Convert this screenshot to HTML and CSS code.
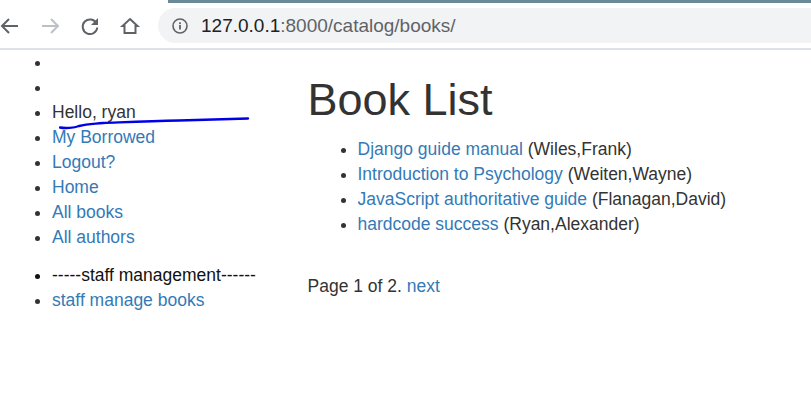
FILE: index.html
```html
<!DOCTYPE html>
<html lang="en">
<head>
<meta charset="utf-8">
<title>Book List</title>
<link rel="stylesheet" href="styles.css">
</head>
<body>
<header class="toolbar">
  <div class="tab-edge"></div>
  <div class="toolbar-row">
    <nav class="nav-buttons">
      <svg class="icon" width="24" height="24" viewBox="0 0 24 24"><path d="M20 12H4.500M11 5l-7 7 7 7" fill="none" stroke="#5f6368" stroke-width="2"/></svg>
      <svg class="icon" width="24" height="24" viewBox="0 0 24 24"><path d="M4 12h15.500M13 5l7 7-7 7" fill="none" stroke="#bdc1c6" stroke-width="2"/></svg>
      <svg class="icon" width="24" height="24" viewBox="0 0 24 24"><path d="M18.600 9.500A7.300 7.300 0 1 0 19.300 13.500" fill="none" stroke="#5f6368" stroke-width="2"/><path d="M20 4v7h-7z" fill="#5f6368"/></svg>
      <svg class="icon" width="24" height="24" viewBox="0 0 24 24"><path d="M12 5l7.500 7H17.500v7h-11v-7H4.500z" fill="none" stroke="#5f6368" stroke-width="2" stroke-linejoin="miter"/></svg>
    </nav>
    <div class="address-bar">
      <svg class="info" width="16" height="16" viewBox="0 0 16 16"><circle cx="8" cy="8" r="7" fill="none" stroke="#5f6368" stroke-width="1.600"/><rect x="7.100" y="7" width="1.800" height="4.500" fill="#5f6368"/><rect x="7.100" y="4.300" width="1.800" height="1.800" fill="#5f6368"/></svg>
      <span class="url"><span class="host">127.0.0.1</span>:8000/catalog/books/</span>
    </div>
  </div>
</header>
<div class="page">
  <aside class="sidebar">
    <ul class="side-list">
      <li>&nbsp;</li>
      <li>&nbsp;</li>
      <li>Hello, ryan</li>
      <li><a href="#">My Borrowed</a></li>
      <li><a href="#">Logout?</a></li>
      <li><a href="#">Home</a></li>
      <li><a href="#">All books</a></li>
      <li><a href="#">All authors</a></li>
    </ul>
    <ul class="side-list">
      <li class="staff">-----staff management------</li>
      <li><a href="#">staff manage books</a></li>
    </ul>
  </aside>
  <main class="content">
    <h1>Book List</h1>
    <ul class="books">
      <li><a href="#">Django guide manual</a> (Wiles,Frank)</li>
      <li><a href="#">Introduction to Psychology</a> (Weiten,Wayne)</li>
      <li><a href="#">JavaScript authoritative guide</a> (Flanagan,David)</li>
      <li><a href="#">hardcode success</a> (Ryan,Alexander)</li>
    </ul>
    <p class="pager">Page 1 of 2. <a href="#">next</a></p>
  </main>
</div>
<svg class="scribble" width="200" height="14" viewBox="0 0 200 14"><path d="M1 10.500C6 11.500 15 11 20 9C28 7 34 7 44 6C70 5 90 4 120 3.500C150 2.500 175 2 189 1.500" fill="none" stroke="#0000e6" stroke-width="2.400" stroke-linecap="round"/></svg>
</body>
</html>
```
FILE: styles.css
```css
* { box-sizing: border-box; }
html, body { margin: 0; padding: 0; }
body {
  position: relative;
  height: 420px;
  overflow: hidden;
  background: #fff;
  color: #333;
  font-family: "Liberation Sans", Arial, sans-serif;
  font-size: 17.5px;
  line-height: 25px;
}
a { color: #337ab7; text-decoration: none; }

.toolbar {
  height: 50px;
  border-bottom: 2px solid #dee1e6;
  background: #fff;
}
.tab-edge {
  height: 3px;
  margin-left: 168px;
  background: #6b8a99;
}
.toolbar-row {
  display: flex;
  align-items: center;
  height: 35px;
  margin-top: 5px;
}
.nav-buttons {
  display: flex;
  gap: 16px;
  width: 160px;
  flex: none;
  margin-left: -2px;
  padding-top: 1px;
}
.icon { flex: none; }
.address-bar {
  flex: 1;
  display: flex;
  align-items: center;
  gap: 13px;
  height: 35px;
  padding-left: 14px;
  background: #f1f3f4;
  border-radius: 17.5px 0 0 17.5px;
}
.url { font-size: 19px; color: #5f6368; line-height: 35px; }
.host { color: #202124; }

.page { display: flex; }
.sidebar { width: 307.5px; flex: none; }
.side-list {
  margin: 0 0 12.5px;
  padding: 0 0 0 52px;
}
.staff { color: #111; }
.content { flex: 1; }
h1 {
  margin: 25px 0 12.5px;
  font-size: 45px;
  font-weight: 500;
  line-height: 49.5px;
}
.books {
  margin: 0 0 24px;
  padding: 0 0 0 50px;
}
.pager { margin: 0; padding-top: 13px; }
.scribble {
  position: absolute;
  left: 59px;
  top: 117px;
}
```
